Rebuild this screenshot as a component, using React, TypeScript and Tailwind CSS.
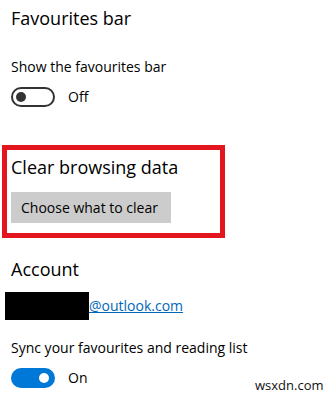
export default function App() {
  return (
    <div className="relative h-[395px] w-[328px] overflow-hidden bg-white font-['Open_Sans',sans-serif] text-black">
      <div className="pl-[11px] pt-[4px]">
        <h2 className="text-[18px] leading-[28px]">Favourites bar</h2>
        <p className="mt-[25px] text-[14px] leading-[20px]">Show the favourites bar</p>
        <div className="mt-[10px] flex items-center gap-[13px]">
          <div className="flex h-[20px] w-[44px] items-center rounded-full border-2 border-[#333]">
            <div className="ml-[3px] h-[10px] w-[10px] rounded-full bg-[#333]" />
          </div>
          <span className="text-[14px] leading-[20px]">Off</span>
        </div>
      </div>

      <div className="ml-[2px] mt-[38px] w-[223px] border-[5px] border-[#e3161f] pb-[10px] pl-[4px] pt-[3px]">
        <h2 className="whitespace-nowrap text-[18px] leading-[28px]">Clear browsing data</h2>
        <button
          type="button"
          className="mt-[11px] h-[31px] w-[160px] whitespace-nowrap bg-[#cccccc] px-[10px] text-left text-[14px] leading-[20px]"
        >
          Choose what to clear
        </button>
      </div>

      <div className="pl-[11px] pt-[17px]">
        <h2 className="text-[18px] leading-[28px]">Account</h2>
        <div className="-ml-[6px] mt-[9px] flex items-center">
          <div className="h-[28px] w-[84px] bg-black" />
          <a href="#" className="text-[14px] leading-[20px] text-[#0067b8] underline">
            @outlook.com
          </a>
        </div>
        <p className="mt-[18px] whitespace-nowrap text-[14px] leading-[20px]">Sync your favourites and reading list</p>
        <div className="mt-[10px] flex items-center gap-[13px]">
          <div className="flex h-[20px] w-[44px] items-center justify-end rounded-full bg-[#0078d7]">
            <div className="mr-[6px] h-[10px] w-[10px] rounded-full bg-white" />
          </div>
          <span className="text-[14px] leading-[20px]">On</span>
        </div>
      </div>

      <span className="absolute left-[255px] top-[377px] text-[13px] leading-[16px] text-[#111]">wsxdn.com</span>
    </div>
  );
}
